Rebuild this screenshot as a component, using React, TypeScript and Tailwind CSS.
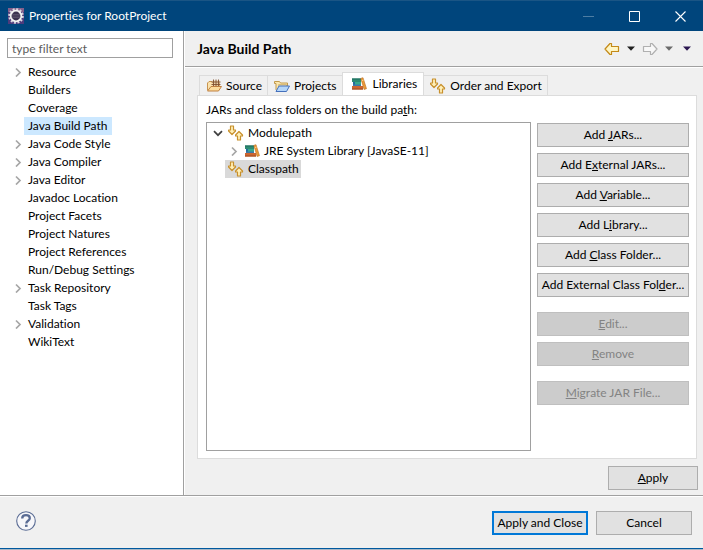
import { useState } from "react";
import type { ReactNode } from "react";

const pages: { name: string; children?: boolean }[] = [
  { name: "Resource", children: true },
  { name: "Builders" },
  { name: "Coverage" },
  { name: "Java Build Path" },
  { name: "Java Code Style", children: true },
  { name: "Java Compiler", children: true },
  { name: "Java Editor", children: true },
  { name: "Javadoc Location" },
  { name: "Project Facets" },
  { name: "Project Natures" },
  { name: "Project References" },
  { name: "Run/Debug Settings" },
  { name: "Task Repository", children: true },
  { name: "Task Tags" },
  { name: "Validation", children: true },
  { name: "WikiText" },
];

function EclipseIcon() {
  return (
    <svg width="16" height="16" viewBox="0 0 16 16" aria-hidden="true">
      <rect width="16" height="16" fill="#4d3b7c" />
      <path d="M0 0h16v4H0z" fill="#84608c" />
      <circle cx="8" cy="8" r="6.8" fill="none" stroke="#d9d6de" strokeWidth="2" strokeDasharray="2 1.56" />
      <circle cx="8" cy="8" r="5.3" fill="#3c3350" stroke="#f4f4f4" strokeWidth="1.8" />
      <path d="M3.8 6.5h8.4M3.6 8h8.8M3.8 9.5h8.4" stroke="#6a6278" strokeWidth=".6" />
    </svg>
  );
}

function Chevron({ open = false }: { open?: boolean }) {
  return open ? (
    <svg width="10" height="10" viewBox="0 0 10 10" fill="none" aria-hidden="true">
      <path d="M1 3.2l4 4 4-4" stroke="#404040" strokeWidth="1.7" />
    </svg>
  ) : (
    <svg width="10" height="10" viewBox="0 0 10 10" fill="none" aria-hidden="true">
      <path d="M3 1.5l4 4-4 4" stroke="#a6a6a6" strokeWidth="1.7" />
    </svg>
  );
}

function PathIcon() {
  return (
    <svg width="16" height="16" viewBox="0 0 16 16" fill="#fff0b8" stroke="#c8902c" strokeWidth="1.2" strokeLinejoin="round" aria-hidden="true">
      <path d="M2.5 1h3v4h2v1L4 9.5.6 6V5h1.9z" />
      <path d="M9.5 15h3v-4h2v-1L11 6.5 7.6 10v1h1.9z" />
    </svg>
  );
}

function LibraryIcon() {
  return (
    <svg width="16" height="16" viewBox="0 0 16 16" aria-hidden="true">
      <path d="M1 2.5h9V6H1z" fill="#2c8a72" />
      <path d="M1 2.5h9v1H1z" fill="#1f6a5c" />
      <path d="M3 6h7v3.5H3z" fill="#38a98c" />
      <path d="M2 6h2v3.5H2z" fill="#246b9c" />
      <path d="M2 8.5h8V10H2z" fill="#3d78a8" />
      <path d="M1 10h11v3.5H1z" fill="#cc6630" />
      <path d="M1 12.5h11v1H1z" fill="#a04a20" />
      <path d="M9.8 2.4l2.2-.7 3.5 11-2.4.8z" fill="#eb9a38" stroke="#b96c20" strokeWidth=".6" />
      <path d="M10.9 4.6l1.5-.5" stroke="#fbd48a" />
    </svg>
  );
}

function SourceIcon() {
  return (
    <svg width="16" height="16" viewBox="0 0 16 16" aria-hidden="true">
      <path d="M1.5 12V5L3 3.5h3L7 5h6.5v3" fill="#fbe3ae" stroke="#c89450" />
      <path d="M6.5 2.5h7v6h-7z" fill="#e9cfa6" />
      <path d="M5.5 4h9M5.5 6.5h9M7.5 1.5V8M10 1.5V8M12.5 1.5V8" stroke="#80502f" strokeWidth=".9" />
      <path d="M1.5 13L5 8.5h10.5l-3 4.5z" fill="#fcdc9c" stroke="#c08040" strokeLinejoin="round" />
    </svg>
  );
}

function ProjectsIcon() {
  return (
    <svg width="16" height="16" viewBox="0 0 16 16" aria-hidden="true">
      <path d="M2 12V5.5H.5v-2h5l1 1.5h7v3" fill="#fbe7ae" stroke="#c39a4a" />
      <path d="M4.5 6.500h8V8h-8z" fill="#fffbe8" stroke="#d8bd7c" />
      <path d="M2 13.5L5 8h10.500l-3 5.500z" fill="#b4d6fa" stroke="#4470bc" strokeLinejoin="round" />
    </svg>
  );
}

function HistoryArrow({ forward = false }: { forward?: boolean }) {
  return forward ? (
    <svg width="16" height="14" viewBox="0 0 16 14" fill="#f8f8f8" stroke="#b0b0b0" strokeWidth="1.2" strokeLinejoin="round" aria-hidden="true">
      <path d="M1.5 4.5h7v-3H10L15 7l-5 5.5H8.5v-3h-7z" />
    </svg>
  ) : (
    <svg width="16" height="14" viewBox="0 0 16 14" fill="#fff6c4" stroke="#c48a18" strokeWidth="1.2" strokeLinejoin="round" aria-hidden="true">
      <path d="M14.5 4.5h-7v-3H6L1 7l5 5.5h1.5v-3h7z" />
    </svg>
  );
}

function Caret({ className }: { className: string }) {
  return (
    <svg width="8" height="5" viewBox="0 0 8 5" className={className} aria-hidden="true">
      <path d="M0 .5h8L4 4.7z" fill="currentColor" />
    </svg>
  );
}

function PushButton({
  children,
  disabled = false,
  primary = false,
  className = "",
}: {
  children: ReactNode;
  disabled?: boolean;
  primary?: boolean;
  className?: string;
}) {
  const look = disabled
    ? "border border-[#bfbfbf] bg-[#cccccc] text-[#838383]"
    : primary
      ? "border-2 border-[#0078d7] bg-[#e1e1e1]"
      : "border border-[#adadad] bg-[#e1e1e1]";
  return (
    <button
      type="button"
      disabled={disabled}
      className={`flex h-6 shrink-0 items-center justify-center whitespace-nowrap ${look} ${className}`}
    >
      <span>{children}</span>
    </button>
  );
}

function Tab({ icon, label, active = false }: { icon: ReactNode; label: string; active?: boolean }) {
  return (
    <button
      type="button"
      role="tab"
      aria-selected={active}
      className={
        active
          ? "-mb-px flex h-6 items-center gap-1.5 border border-b-0 border-[#dcdcdc] bg-white pr-1.5 pb-0.5 pl-2"
          : "flex h-5 items-center gap-1 border border-r-0 border-b-0 border-[#dcdcdc] bg-[#f0f0f0] pr-[5px] pl-1.5 last:border-r last:border-l-0"
      }
    >
      {icon}
      <span className="whitespace-nowrap">{label}</span>
    </button>
  );
}

export default function App() {
  const [filter, setFilter] = useState("");
  const [page, setPage] = useState("Java Build Path");
  const shown = pages.filter((p) => p.name.toLowerCase().includes(filter.toLowerCase()));

  return (
    <div className="flex min-h-screen flex-col bg-[#f0f0f0] font-['Lato','Open_Sans',sans-serif] text-[12px] leading-[18px] text-black [font-variant-ligatures:none]">
      <header className="flex h-[31px] shrink-0 items-center border-t border-[#1a5585] bg-[#00457c] pl-2 text-white">
        <EclipseIcon />
        <h1 className="ml-[5px] flex-1">Properties for RootProject</h1>
        <button type="button" disabled aria-label="Minimize" className="flex h-full w-[46px] items-center justify-center">
          <svg width="11" height="11" viewBox="0 0 11 11"><path d="M0 5.5h11" stroke="#4d7da3" /></svg>
        </button>
        <button type="button" aria-label="Maximize" className="flex h-full w-[46px] items-center justify-center">
          <svg width="11" height="11" viewBox="0 0 11 11"><path d="M.5.5h10v10H.5z" fill="none" stroke="#fff" /></svg>
        </button>
        <button type="button" aria-label="Close" className="flex h-full w-[46px] items-center justify-center">
          <svg width="11" height="11" viewBox="0 0 11 11"><path d="M.5.5l10 10M10.5.5l-10 10" stroke="#fff" strokeWidth="1.1" /></svg>
        </button>
      </header>

      <div className="flex flex-1">
        <aside className="w-[184px] shrink-0 border-r border-[#a0a0a0] bg-white pt-[7px]">
          <input
            type="text"
            aria-label="Filter pages"
            placeholder="type filter text"
            value={filter}
            onChange={(e) => setFilter(e.target.value)}
            className="ml-[7px] block h-5 w-[166px] border border-[#a0a0a0] bg-white px-1 outline-none placeholder:text-[#5c5c5c]"
          />
          <ul role="tree" aria-label="Property pages" className="mt-[5px]">
            {shown.map((p) => (
              <li key={p.name} role="treeitem" aria-selected={p.name === page} className="flex h-[18px] items-center pl-[13px]">
                <span className="w-[11px]">{p.children && <Chevron />}</span>
                <button
                  type="button"
                  onClick={() => setPage(p.name)}
                  className={`h-full px-1 whitespace-nowrap ${p.name === page ? "bg-[#cce8ff]" : ""}`}
                >
                  {p.name}
                </button>
              </li>
            ))}
          </ul>
        </aside>

        <main className="flex min-w-0 flex-1 flex-col border-l border-white">
          <div className="flex h-9 shrink-0 items-center border-b border-[#a0a0a0] pr-3 pl-3">
            <h2 className="flex-1 text-[14px] font-bold">Java Build Path</h2>
            <div className="flex items-center">
              <button type="button" aria-label="Back"><HistoryArrow /></button>
              <button type="button" aria-label="Back history" className="ml-[7px]"><Caret className="text-[#202020]" /></button>
              <button type="button" aria-label="Forward" disabled className="ml-[7px]"><HistoryArrow forward /></button>
              <button type="button" aria-label="Forward history" disabled className="ml-[7px]"><Caret className="text-[#6a6a6a]" /></button>
              <button type="button" aria-label="View menu" className="ml-[10px]"><Caret className="text-[#2b1750]" /></button>
            </div>
          </div>

          <div className="flex flex-1 flex-col border-t border-white pt-1 pr-[5px] pb-[5px] pl-3">
            <div role="tablist" className="flex h-[23px] shrink-0 items-end pl-0.5">
              <Tab icon={<SourceIcon />} label="Source" />
              <Tab icon={<ProjectsIcon />} label="Projects" />
              <Tab icon={<LibraryIcon />} label="Libraries" active />
              <Tab icon={<PathIcon />} label="Order and Export" />
            </div>
            <section role="tabpanel" className="mr-px flex flex-1 flex-col border border-[#dcdcdc] bg-white px-2 pt-[5px] pb-[7px]">
              <p className="mb-[3px]">
                JARs and class folders on the build pa<u>t</u>h:
              </p>
              <div className="flex flex-1 gap-1.5">
                <ul role="tree" aria-label="Build path" className="min-w-0 flex-1 border border-[#a0a0a0] pt-px">
                  <li role="treeitem" aria-selected={false} aria-expanded="true">
                    <div className="flex h-[18px] items-center pl-1.5">
                      <Chevron open />
                      <span className="ml-[5px] flex items-center gap-1"><PathIcon />Modulepath</span>
                    </div>
                    <ul role="group">
                      <li role="treeitem" aria-selected={false} className="flex h-[18px] items-center pl-[22px]">
                        <Chevron />
                        <span className="ml-[5px] flex items-center gap-1"><LibraryIcon />JRE System Library [JavaSE-11]</span>
                      </li>
                    </ul>
                  </li>
                  <li role="treeitem" aria-selected={true} className="flex h-[18px] pl-[18px]">
                    <span className="flex items-center gap-1 bg-[#d9d9d9] pr-0.5 pl-[3px]"><PathIcon />Classpath</span>
                  </li>
                </ul>
                <div className="mr-[-1px] flex w-[152px] shrink-0 flex-col gap-1.5 pt-px">
                  <PushButton>Add <u>J</u>ARs...</PushButton>
                  <PushButton>Add E<u>x</u>ternal JARs...</PushButton>
                  <PushButton>Add <u>V</u>ariable...</PushButton>
                  <PushButton>Add L<u>i</u>brary...</PushButton>
                  <PushButton>Add <u>C</u>lass Folder...</PushButton>
                  <PushButton>Add External Class Fol<u>d</u>er...</PushButton>
                  <PushButton disabled className="mt-[9px]"><u>E</u>dit...</PushButton>
                  <PushButton disabled><u>R</u>emove</PushButton>
                  <PushButton disabled className="mt-[9px]"><u>M</u>igrate JAR File...</PushButton>
                </div>
              </div>
            </section>
            <div className="mt-[7px] flex justify-end">
              <PushButton className="w-[90px]"><u>A</u>pply</PushButton>
            </div>
          </div>
        </main>
      </div>

      <footer className="shrink-0 border-t border-[#a0a0a0]">
        <div className="flex h-[52px] items-center gap-2 border-t border-white pr-[11px] pl-4">
          <button type="button" aria-label="Help" className="-mt-1">
            <svg width="20" height="20" viewBox="0 0 20 20" fill="none" stroke="#5a6c94" aria-hidden="true">
              <circle cx="10" cy="10" r="9.3" strokeWidth="1.1" fill="#f7f7fa" />
              <path d="M6.2 7.4C6.2 5 7.8 4.2 10 4.2s3.8 1 3.8 3c0 2.6-3.5 2.5-3.5 5.2" strokeWidth="2.3" />
              <path d="M9 14.8h2.6" strokeWidth="2.2" />
            </svg>
          </button>
          <span className="flex-1" />
          <PushButton primary className="w-24">Apply and Close</PushButton>
          <PushButton className="w-24">Cancel</PushButton>
        </div>
        <div className="h-0.5 border-t border-[#00599f] bg-[#a9b8c6]" />
      </footer>
    </div>
  );
}
